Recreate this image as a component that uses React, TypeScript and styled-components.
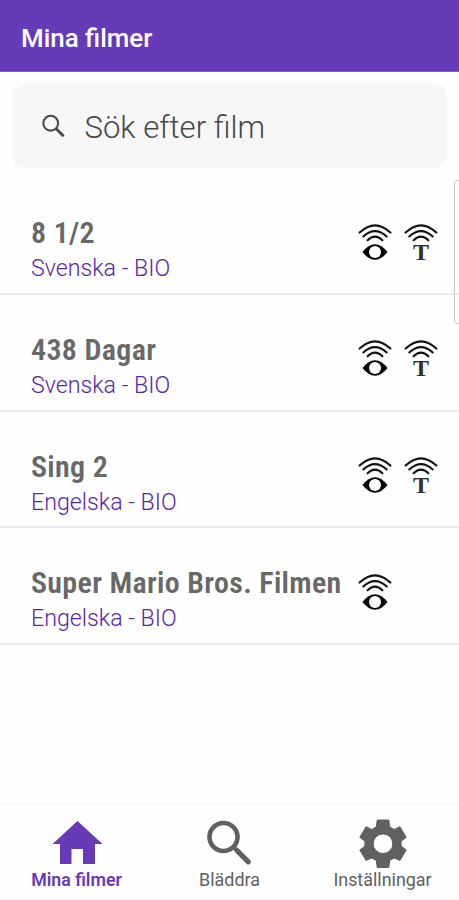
import React from 'react';
import styled, { createGlobalStyle } from 'styled-components';

const GlobalStyle = createGlobalStyle`
  * { box-sizing: border-box; }
  body { margin: 0; background: #fefefe; font-family: Roboto, "Liberation Sans", sans-serif; }
`;

const Screen = styled.main`
  position: relative;
  display: flex;
  flex-direction: column;
  width: 459px;
  height: 900px;
  overflow: hidden;
  background: #fefefe;
`;

const AppBar = styled.header`
  flex: none;
  display: flex;
  align-items: center;
  height: 72px;
  padding: 5px 21px 0;
  background: #673ab7;
  border-bottom: 1px solid #7e5fbd;
`;

const Heading = styled.h1`
  margin: 0;
  color: #fff;
  font-size: 25.9px;
  line-height: 30px;
  font-weight: 500;
`;

const SearchBox = styled.label`
  flex: none;
  display: flex;
  align-items: center;
  height: 84px;
  margin: 12px 12px 10px;
  padding: 2px 28px 0;
  gap: 16.5px;
  border-radius: 13px;
  background: #f7f7f7;
  color: #484848;
`;

const SearchText = styled.span`
  padding-top: 2px;
  font-size: 31.1px;
  line-height: 36px;
  font-weight: 300;
  white-space: nowrap;
`;

const MovieList = styled.ul`
  flex: 1;
  margin: 0;
  padding: 0;
  list-style: none;
`;

const MovieRow = styled.li`
  display: flex;
  align-items: flex-start;
  justify-content: space-between;
  height: 116.75px;
  padding: 36px 19px 0 31px;
  border-bottom: 2px solid #ececec;
`;

const MovieText = styled.div`
  width: 320px;
  white-space: nowrap;
`;

const MovieTitle = styled.h2`
  margin: 0;
  color: #686868;
  font-family: "Roboto Condensed", Roboto, sans-serif;
  font-stretch: 75%;
  font-size: 30px;
  line-height: 37px;
  font-weight: 650;
  letter-spacing: 0.32px;
`;

const MovieMeta = styled.p`
  margin: 0;
  color: #5727aa;
  font-size: 23.2px;
  line-height: 35px;
  font-weight: 320;
`;

const Badges = styled.div`
  display: flex;
  width: 82px;
  gap: 12px;
  padding-top: 9.5px;
`;

const BottomNav = styled.nav`
  flex: none;
  display: grid;
  grid-template-columns: repeat(3, 1fr);
  height: 97px;
  border-top: 1px solid #f5f5f5;
  border-bottom: 2px solid #f7f7f7;
`;

const NavItem = styled.a<{ $active?: boolean }>`
  display: flex;
  flex-direction: column;
  align-items: center;
  padding-top: 14px;
  color: ${(p) => (p.$active ? '#673ab7' : '#606060')};
  font-size: ${(p) => (p.$active ? '17.8px' : '17.9px')};
  font-weight: ${(p) => (p.$active ? 650 : 370)};
  line-height: 22px;
`;

const NavGlyph = styled.svg`
  flex: none;
  display: block;
  width: 52px;
  height: 51px;
`;

const ScrollHint = styled.div`
  position: absolute;
  top: 180px;
  right: -8px;
  width: 13px;
  height: 144px;
  border: 1.5px solid #c8c8c8;
  border-radius: 4px;
`;

function Waves() {
  return (
    <g fill="none" stroke="#111" strokeWidth="2.1" strokeLinecap="round">
      <path d="M1.6 8.6Q17 -5.8 32.4 8.6" />
      <path d="M5.3 12.5Q17 1.8 28.7 12.5" />
      <path d="M9.6 16.3Q17 9 24.4 16.3" />
    </g>
  );
}

function EyeBadge() {
  return (
    <svg width="34" height="46" viewBox="0 0 34 46">
      <Waves />
      <path d="M4.5 28Q10.5 20.2 17 20.2T29.5 28Q23.5 35.8 17 35.8T4.5 28Z" fill="#050505" />
      <circle cx="17" cy="28" r="6" fill="#fefefe" />
    </svg>
  );
}

const BadgeLetter = styled.text`
  font-family: "Liberation Serif", serif;
  font-size: 24px;
  font-weight: 700;
  fill: #303030;
`;

function TextBadge() {
  return (
    <svg width="34" height="46" viewBox="0 0 34 46">
      <Waves />
      <BadgeLetter x="17" y="36.3" textAnchor="middle">T</BadgeLetter>
    </svg>
  );
}

const movies = [
  { title: '8 1/2', meta: 'Svenska - BIO', text: true },
  { title: '438 Dagar', meta: 'Svenska - BIO', text: true },
  { title: 'Sing 2', meta: 'Engelska - BIO', text: true },
  { title: 'Super Mario Bros. Filmen', meta: 'Engelska - BIO', text: false },
];

export default function App() {
  return (
    <Screen>
      <GlobalStyle />
      <AppBar><Heading>Mina filmer</Heading></AppBar>
      <SearchBox>
        <svg width="28" height="28" viewBox="0 0 28 28" fill="none" stroke="currentColor" strokeWidth="2.1">
          <circle cx="10.7" cy="10.2" r="7.4" />
          <path d="M15.9 15.4L23.7 23.2" strokeWidth="2.8" />
        </svg>
        <SearchText>Sök efter film</SearchText>
      </SearchBox>
      <MovieList>
        {movies.map((m) => (
          <MovieRow key={m.title}>
            <MovieText>
              <MovieTitle>{m.title}</MovieTitle>
              <MovieMeta>{m.meta}</MovieMeta>
            </MovieText>
            <Badges>
              <EyeBadge />
              {m.text && <TextBadge />}
            </Badges>
          </MovieRow>
        ))}
      </MovieList>
      <BottomNav>
        <NavItem $active>
          <NavGlyph viewBox="0 0 52 51" fill="currentColor">
            <path d="M26.5 3L51.5 26H44V46H32V31H20.5V46H9V26H1.5Z" />
          </NavGlyph>
          Mina filmer
        </NavItem>
        <NavItem>
          <NavGlyph viewBox="0 0 52 51" fill="none" stroke="currentColor">
            <circle cx="19.5" cy="19" r="14" strokeWidth="4.6" />
            <path d="M29 28.5L33 32.5" strokeWidth="4" />
            <path d="M33 32.5L44.3 43.8" strokeWidth="5.2" strokeLinecap="round" />
          </NavGlyph>
          Bläddra
        </NavItem>
        <NavItem>
          <NavGlyph viewBox="0 0 52 51" fill="currentColor">
            <path
              fillRule="evenodd"
              stroke="currentColor"
              strokeWidth="1"
              strokeLinejoin="round"
              d="M20.2 2H31.8L32.7 8.8L37.2 11.4L43 8.8L49.2 19.3L44.1 23.2V28.2L49.2 32L43 42.4L37.2 40L32.7 42.5L31.8 49.5H20.2L19.3 42.5L14.8 40L9 42.4L2.8 32L7.9 28.2V23.2L2.8 19.3L9 8.8L14.8 11.4L19.3 8.8ZM26 15.9A9.8 9.8 0 1 0 26 35.5A9.8 9.8 0 1 0 26 15.9Z"
            />
          </NavGlyph>
          Inställningar
        </NavItem>
      </BottomNav>
      <ScrollHint />
    </Screen>
  );
}
